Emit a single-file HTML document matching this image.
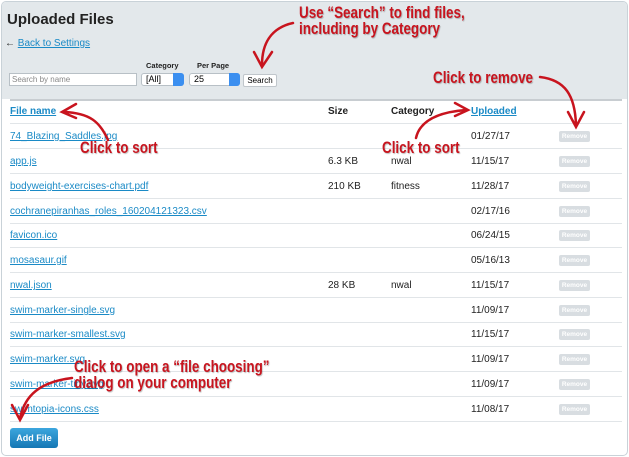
<!DOCTYPE html>
<html><head><meta charset="utf-8"><style>
*{margin:0;padding:0;box-sizing:border-box}
body{width:629px;height:457px;background:#fff;font-family:"Liberation Sans",sans-serif;position:relative;overflow:hidden}
.panel{position:absolute;left:1px;top:1px;width:627px;height:455px;border:1px solid #c9d2d8;border-radius:5px;background:#fff;overflow:hidden}
.top{position:absolute;left:0;top:0;width:100%;height:97px;background:#e3e8eb}
.w{position:absolute;left:-2px;top:0;width:640px;height:460px}
.a{position:absolute;white-space:nowrap}
.lnk{color:#1a8ac6;text-decoration:underline;font-size:10px}
.t{font-size:10px;color:#222}
.sep{position:absolute;left:10px;width:612px;height:1px;background:#e1e5e8}
.rm{position:absolute;left:559px;width:31px;height:11px;background:#d8dde1;border-radius:2px;color:#fff;font-size:6.5px;font-weight:bold;text-align:center;line-height:11px}
.red{position:absolute;white-space:nowrap;font-family:"Liberation Sans",sans-serif;font-weight:bold;color:#c8141e;font-size:17px;line-height:16px;text-shadow:1px 1px 1px rgba(0,0,0,.25);transform:scaleX(0.79);transform-origin:0 0}
.sel{position:absolute;height:13px;background:#fff;border:1px solid #b8c0c6;border-radius:3px;font-size:9px;padding-left:4px;line-height:11px}
.sel i{position:absolute;right:-1px;top:-1px;width:11px;height:13px;background:#3b8ff0;border-radius:0 3px 3px 0}
</style></head><body>
<div class="panel">
<div class="top"></div>
<div class="w">
<div class="a" style="left:7px;top:9px;font-size:15px;font-weight:bold;color:#222">Uploaded Files</div>
<div class="a" style="left:5px;top:36px;font-size:10px;color:#222">← <span style="color:#1a8ac6;text-decoration:underline">Back to Settings</span></div>
<div class="a" style="left:146px;top:59px;font-size:7.5px;font-weight:bold;color:#222">Category</div>
<div class="a" style="left:197px;top:59px;font-size:7.5px;font-weight:bold;color:#222">Per Page</div>
<div class="a" style="left:9px;top:71px;width:128px;height:13px;background:#fff;border:1px solid #b8c0c6;font-size:8px;color:#888;padding-left:2px;line-height:11px">Search by name</div>
<div class="sel" style="left:141px;top:71px;width:43px">[All]<i></i></div>
<div class="sel" style="left:189px;top:71px;width:51px">25<i></i></div>
<div class="a" style="left:243px;top:72px;width:34px;height:13px;background:#fff;border:1px solid #c0c6cb;border-radius:2px;font-size:8px;text-align:center;line-height:11px">Search</div>
<div style="position:absolute;left:10px;top:97px;width:612px;height:2px;background:#c8cdd1"></div>
<div class="a lnk" style="left:10px;top:104px;font-weight:bold">File name</div>
<div class="a t" style="left:328px;top:104px;font-weight:bold">Size</div>
<div class="a t" style="left:391px;top:104px;font-weight:bold">Category</div>
<div class="a lnk" style="left:471px;top:104px;font-weight:bold">Uploaded</div>
<div class="sep" style="top:121px"></div>
<div class="a lnk" style="left:10px;top:129px">74_Blazing_Saddles.jpg</div><div class="a t" style="left:471px;top:129px">01/27/17</div><div class="rm" style="top:129px">Remove</div><div class="sep" style="top:146px"></div>
<div class="a lnk" style="left:10px;top:154px">app.js</div><div class="a t" style="left:328px;top:154px">6.3 KB</div><div class="a t" style="left:391px;top:154px">nwal</div><div class="a t" style="left:471px;top:154px">11/15/17</div><div class="rm" style="top:154px">Remove</div><div class="sep" style="top:171px"></div>
<div class="a lnk" style="left:10px;top:179px">bodyweight-exercises-chart.pdf</div><div class="a t" style="left:328px;top:179px">210 KB</div><div class="a t" style="left:391px;top:179px">fitness</div><div class="a t" style="left:471px;top:179px">11/28/17</div><div class="rm" style="top:179px">Remove</div><div class="sep" style="top:196px"></div>
<div class="a lnk" style="left:10px;top:204px">cochranepiranhas_roles_160204121323.csv</div><div class="a t" style="left:471px;top:204px">02/17/16</div><div class="rm" style="top:204px">Remove</div><div class="sep" style="top:221px"></div>
<div class="a lnk" style="left:10px;top:228px">favicon.ico</div><div class="a t" style="left:471px;top:228px">06/24/15</div><div class="rm" style="top:228px">Remove</div><div class="sep" style="top:245px"></div>
<div class="a lnk" style="left:10px;top:253px">mosasaur.gif</div><div class="a t" style="left:471px;top:253px">05/16/13</div><div class="rm" style="top:253px">Remove</div><div class="sep" style="top:270px"></div>
<div class="a lnk" style="left:10px;top:278px">nwal.json</div><div class="a t" style="left:328px;top:278px">28 KB</div><div class="a t" style="left:391px;top:278px">nwal</div><div class="a t" style="left:471px;top:278px">11/15/17</div><div class="rm" style="top:278px">Remove</div><div class="sep" style="top:295px"></div>
<div class="a lnk" style="left:10px;top:303px">swim-marker-single.svg</div><div class="a t" style="left:471px;top:303px">11/09/17</div><div class="rm" style="top:303px">Remove</div><div class="sep" style="top:320px"></div>
<div class="a lnk" style="left:10px;top:327px">swim-marker-smallest.svg</div><div class="a t" style="left:471px;top:327px">11/15/17</div><div class="rm" style="top:327px">Remove</div><div class="sep" style="top:344px"></div>
<div class="a lnk" style="left:10px;top:352px">swim-marker.svg</div><div class="a t" style="left:471px;top:352px">11/09/17</div><div class="rm" style="top:352px">Remove</div><div class="sep" style="top:369px"></div>
<div class="a lnk" style="left:10px;top:377px">swim-marker-tiny.svg</div><div class="a t" style="left:471px;top:377px">11/09/17</div><div class="rm" style="top:377px">Remove</div><div class="sep" style="top:394px"></div>
<div class="a lnk" style="left:10px;top:402px">swimtopia-icons.css</div><div class="a t" style="left:471px;top:402px">11/08/17</div><div class="rm" style="top:402px">Remove</div><div class="sep" style="top:419px"></div>
<div class="a" style="left:10px;top:426px;width:48px;height:20px;background:linear-gradient(#3ca6de,#1577b4);border-radius:3px;color:#fff;font-size:9px;font-weight:bold;text-align:center;line-height:20px">Add File</div>
</div>
</div>
<div class="red" style="left:299px;top:5px">Use “Search” to find files,</div>
<div class="red" style="left:299px;top:21px">including by Category</div>
<div class="red" style="left:433px;top:70px">Click to remove</div>
<div class="red" style="left:80px;top:140px">Click to sort</div>
<div class="red" style="left:382px;top:140px">Click to sort</div>
<div class="red" style="left:74px;top:359px">Click to open a “file choosing”</div>
<div class="red" style="left:74px;top:375px">dialog on your computer</div>
<svg width="629" height="457" style="position:absolute;left:0;top:0" fill="none" stroke="#c8141e" stroke-width="2.5" stroke-linecap="round">
<path d="M293 23 C270 28 262 45 262 65"/><path d="M254 52 L262 67 L272 52"/>
<path d="M540 77 C565 80 575 95 576 125"/><path d="M568 112 L576 127 L584 112"/>
<path d="M108 140 C100 122 90 113 64 112"/><path d="M76 104 L62 112 L76 118"/>
<path d="M416 138 C420 120 440 112 466 110"/><path d="M455 103 L468 110 L455 116"/>
<path d="M72 378 C40 382 25 395 20 418"/><path d="M12 405 L20 420 L28 405"/>
</svg>
</body></html>
